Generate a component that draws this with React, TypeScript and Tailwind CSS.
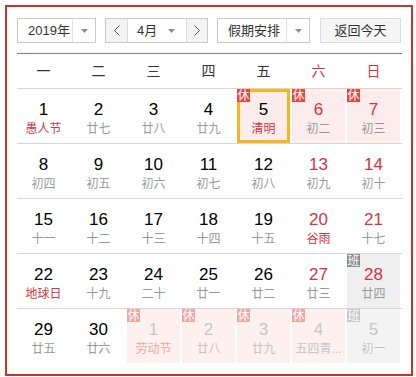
import React from "react";

type Day = {
  d: number;
  l: string;
  fest?: boolean;
  wk?: boolean;
  rest?: boolean;
  work?: boolean;
  other?: boolean;
  sel?: boolean;
};

const weeks: Day[][] = [
  [
    { d: 1, l: "愚人节", fest: true },
    { d: 2, l: "廿七" },
    { d: 3, l: "廿八" },
    { d: 4, l: "廿九" },
    { d: 5, l: "清明", fest: true, rest: true, sel: true },
    { d: 6, l: "初二", wk: true, rest: true },
    { d: 7, l: "初三", wk: true, rest: true },
  ],
  [
    { d: 8, l: "初四" },
    { d: 9, l: "初五" },
    { d: 10, l: "初六" },
    { d: 11, l: "初七" },
    { d: 12, l: "初八" },
    { d: 13, l: "初九", wk: true },
    { d: 14, l: "初十", wk: true },
  ],
  [
    { d: 15, l: "十一" },
    { d: 16, l: "十二" },
    { d: 17, l: "十三" },
    { d: 18, l: "十四" },
    { d: 19, l: "十五" },
    { d: 20, l: "谷雨", wk: true, fest: true },
    { d: 21, l: "十七", wk: true },
  ],
  [
    { d: 22, l: "地球日", fest: true },
    { d: 23, l: "十九" },
    { d: 24, l: "二十" },
    { d: 25, l: "廿一" },
    { d: 26, l: "廿二" },
    { d: 27, l: "廿三", wk: true },
    { d: 28, l: "廿四", wk: true, work: true },
  ],
  [
    { d: 29, l: "廿五" },
    { d: 30, l: "廿六" },
    { d: 1, l: "劳动节", fest: true, rest: true, other: true },
    { d: 2, l: "廿八", rest: true, other: true },
    { d: 3, l: "廿九", rest: true, other: true },
    { d: 4, l: "五四青...", wk: true, rest: true, other: true },
    { d: 5, l: "初一", wk: true, work: true, other: true },
  ],
];

const heads = ["一", "二", "三", "四", "五", "六", "日"];

const Caret = () => (
  <svg width="7" height="4" viewBox="0 0 7 4">
    <polygon points="0,0 7,0 3.5,4" fill="#8f8f8f" />
  </svg>
);

const Chevron = ({ right }: { right?: boolean }) => (
  <svg width="6" height="11" viewBox="0 0 6 11">
    <polyline
      points={right ? "0.5,0.5 5.5,5.5 0.5,10.5" : "5.5,0.5 0.5,5.5 5.5,10.5"}
      fill="none"
      stroke="#555"
      strokeWidth="1"
    />
  </svg>
);

const Cell = ({ day }: { day: Day }) => {
  let bg = "";
  if (day.rest) bg = day.other ? "bg-[#fdf0ef]" : "bg-[#fdecec]";
  if (day.work) bg = day.other ? "bg-[#f3f3f3]" : "bg-[#efefef]";

  const num = day.other
    ? "text-[#c6c6c6]"
    : day.wk
    ? "text-[#d3353e]"
    : "text-black";

  const lunar = day.other
    ? day.fest
      ? "text-[#e8a9a9]"
      : "text-[#c6c6c6]"
    : day.fest
    ? "text-[#d3353e]"
    : "text-[#999]";

  return (
    <div className="w-[55px] shrink-0">
      <div
        className={`relative flex h-[54px] w-[53px] flex-col items-center pt-[10px] ${bg} ${
          day.sel ? "shadow-[inset_0_0_0_3px_#f3b520]" : ""
        }`}
      >
        {day.rest && (
          <span
            className={`absolute left-0 top-0 flex h-[13px] w-[13px] items-center justify-center text-[12px] leading-none text-white ${
              day.other ? "bg-[#f3a5a2]" : "bg-[#e5473f]"
            }`}
          >
            休
          </span>
        )}
        {day.work && (
          <span
            className={`absolute left-0 top-0 flex h-[13px] w-[13px] items-center justify-center text-[12px] leading-none text-white ${
              day.other ? "bg-[#c8c8c8]" : "bg-[#8c8c8c]"
            }`}
          >
            班
          </span>
        )}
        <span className={`text-[17px] leading-[22px] ${num}`}>{day.d}</span>
        <span className={`whitespace-nowrap text-[12px] leading-[16px] ${lunar}`}>{day.l}</span>
      </div>
    </div>
  );
};

export default function App() {
  return (
    <div
      className="h-[377px] w-[416px] bg-white pl-[5px] pt-[5px]"
      style={{ fontFamily: '"Liberation Sans", "Noto Sans CJK SC", sans-serif' }}
    >
      <div className="h-[371px] w-[408px] border-2 border-[#c8332c] pl-[10px] pt-[11px]">
        <div className="w-[385px]">
          {/* Toolbar */}
          <div className="flex h-[25px] text-[13px] text-[#333]">
            <div className="flex w-[79px] border border-[#cacaca] bg-white">
              <span className="flex flex-1 items-center pl-[10px]">2019年</span>
              <span className="flex w-[23px] items-center justify-center border-l border-[#e0e0e0]">
                <Caret />
              </span>
            </div>

            <div className="ml-[9px] flex w-[103px] border border-[#cacaca]">
              <span className="flex w-[21px] items-center justify-center bg-[#f3f3f3]">
                <Chevron />
              </span>
              <span className="flex w-[60px] items-center justify-between border-x border-[#dadada] bg-white pl-[9px] pr-[11px]">
                4月
                <Caret />
              </span>
              <span className="flex flex-1 items-center justify-center bg-[#f3f3f3]">
                <Chevron right />
              </span>
            </div>

            <div className="ml-[9px] flex w-[93px] border border-[#cacaca] bg-white">
              <span className="flex flex-1 items-center pl-[10px]">假期安排</span>
              <span className="flex w-[23px] items-center justify-center border-l border-[#e0e0e0]">
                <Caret />
              </span>
            </div>

            <button className="ml-[10px] flex w-[81px] items-center justify-center border border-[#dcdcdc] bg-[#f5f5f5] text-[13px] text-[#333]">
              返回今天
            </button>
          </div>

          <div className="mt-[10px] h-px bg-[#d8615c]" />

          {/* Week header */}
          <div className="flex h-[35px] border-b border-[#d6d6d6]">
            {heads.map((h, i) => (
              <div
                key={h}
                className={`flex w-[53px] mr-[2px] items-center justify-center text-[14px] ${
                  i >= 5 ? "text-[#d3353e]" : "text-[#333]"
                }`}
              >
                {h}
              </div>
            ))}
          </div>

          {/* Weeks */}
          {weeks.map((w, i) => (
            <div
              key={i}
              className={`flex h-[55px] ${i < weeks.length - 1 ? "border-b border-[#d6d6d6]" : ""}`}
            >
              {w.map((day, j) => (
                <Cell key={j} day={day} />
              ))}
            </div>
          ))}
        </div>
      </div>
    </div>
  );
}
